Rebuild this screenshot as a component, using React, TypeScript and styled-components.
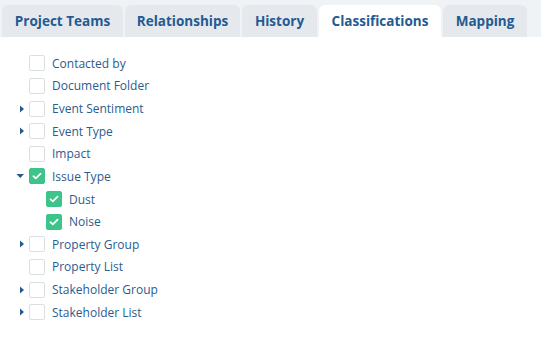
import * as React from 'react';
import styled, { createGlobalStyle } from 'styled-components';

const GlobalStyle = createGlobalStyle`
  body {
    margin: 0;
    background: #ffffff;
    font-family: "Open Sans", "Liberation Sans", sans-serif;
  }
`;

const TabBar = styled.div`
  display: flex;
  gap: 2px;
  height: 37px;
  padding: 5px 0 0 2px;
  box-sizing: border-box;
  background-color: #eff3f5;
`;

const Tab = styled.div<{ $active?: boolean; $width: number }>`
  display: flex;
  align-items: center;
  justify-content: center;
  width: ${(p) => p.$width}px;
  height: 32px;
  border-radius: 6px 6px 0 0;
  background-color: ${(p) => (p.$active ? '#ffffff' : '#e5e9ed')};
  color: #235a92;
  font-size: 13.5px;
  font-weight: 700;
  white-space: nowrap;
`;

const Tree = styled.div`
  padding-top: 15px;
`;

const Row = styled.div<{ $depth: number }>`
  display: flex;
  align-items: center;
  height: 22.64px;
  padding-left: ${(p) => 17 + p.$depth * 17}px;
`;

const Toggle = styled.span`
  display: flex;
  align-items: center;
  width: 12px;
  height: 16px;
`;

const Box = styled.span<{ $checked?: boolean }>`
  display: flex;
  align-items: center;
  justify-content: center;
  width: 16px;
  height: 16px;
  box-sizing: border-box;
  border-radius: 2px;
  border: 1px solid ${(p) => (p.$checked ? '#3cc48b' : '#dcdfe2')};
  background-color: ${(p) => (p.$checked ? '#3cc48b' : '#ffffff')};
  margin-right: 7px;
`;

const Label = styled.span`
  font-size: 12px;
  color: #2b5c8e;
  white-space: nowrap;
`;

type Node = {
  label: string;
  depth?: number;
  arrow?: 'right' | 'down';
  checked?: boolean;
};

const nodes: Node[] = [
  { label: 'Contacted by' },
  { label: 'Document Folder' },
  { label: 'Event Sentiment', arrow: 'right' },
  { label: 'Event Type', arrow: 'right' },
  { label: 'Impact' },
  { label: 'Issue Type', arrow: 'down', checked: true },
  { label: 'Dust', depth: 1, checked: true },
  { label: 'Noise', depth: 1, checked: true },
  { label: 'Property Group', arrow: 'right' },
  { label: 'Property List' },
  { label: 'Stakeholder Group', arrow: 'right' },
  { label: 'Stakeholder List', arrow: 'right' },
];

const Arrow = ({ dir }: { dir: 'right' | 'down' }) =>
  dir === 'right' ? (
    <svg width="6" height="8" viewBox="0 0 6 8" style={{ marginLeft: 2 }}>
      <path d="M1 0.5 L5 4 L1 7.5 Z" fill="#235a92" />
    </svg>
  ) : (
    <svg width="9" height="6" viewBox="0 0 9 6" style={{ marginLeft: -1 }}>
      <path d="M0.5 1 L8 1 L4.25 5 Z" fill="#235a92" />
    </svg>
  );

const Check = () => (
  <svg width="10" height="8" viewBox="0 0 10 8">
    <path d="M1.4 4.2 L3.8 6.4 L8.6 1.6" fill="none" stroke="#ffffff" strokeWidth="1.7" strokeLinecap="round" strokeLinejoin="round" />
  </svg>
);

const tabs = [
  { label: 'Project Teams', width: 121 },
  { label: 'Relationships', width: 115 },
  { label: 'History', width: 75 },
  { label: 'Classifications', width: 122 },
  { label: 'Mapping', width: 84 },
];

const App: React.FC = () => (
  <>
    <GlobalStyle />
    <TabBar>
      {tabs.map((t) => (
        <Tab key={t.label} $width={t.width} $active={t.label === 'Classifications'}>
          {t.label}
        </Tab>
      ))}
    </TabBar>
    <Tree>
      {nodes.map((n) => (
        <Row key={n.label} $depth={n.depth ?? 0}>
          <Toggle>{n.arrow && <Arrow dir={n.arrow} />}</Toggle>
          <Box $checked={n.checked}>{n.checked && <Check />}</Box>
          <Label>{n.label}</Label>
        </Row>
      ))}
    </Tree>
  </>
);

export default App;
